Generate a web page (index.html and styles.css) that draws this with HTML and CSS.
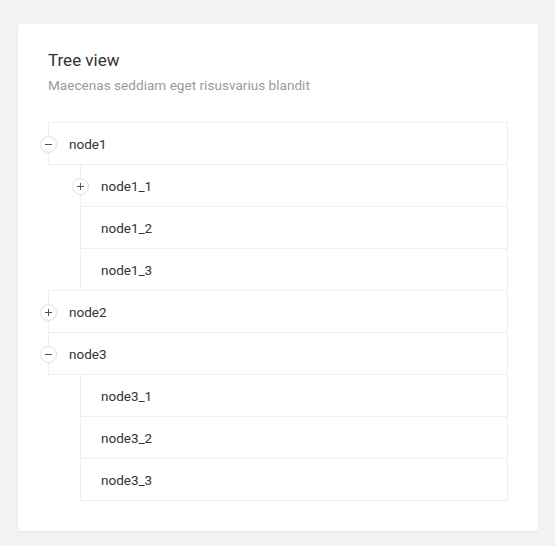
FILE: index.html
```html
<!DOCTYPE html>
<html>
<head>
<meta charset="utf-8">
<link rel="stylesheet" href="styles.css">
</head>
<body>
<div class="card">
  <h1 class="title">Tree view</h1>
  <p class="subtitle">Maecenas seddiam eget risusvarius blandit</p>
  <div class="tree">
    <div class="node">
      <div class="row"><span class="toggle minus"></span>node1</div>
      <div class="children">
        <div class="node"><div class="row"><span class="toggle plus"></span>node1_1</div></div>
        <div class="node"><div class="row">node1_2</div></div>
        <div class="node"><div class="row">node1_3</div></div>
      </div>
    </div>
    <div class="node">
      <div class="row"><span class="toggle plus"></span>node2</div>
    </div>
    <div class="node">
      <div class="row"><span class="toggle minus"></span>node3</div>
      <div class="children">
        <div class="node"><div class="row">node3_1</div></div>
        <div class="node"><div class="row">node3_2</div></div>
        <div class="node"><div class="row">node3_3</div></div>
      </div>
    </div>
  </div>
</div>
</body>
</html>
```
FILE: styles.css
```css
html, body {
  margin: 0;
  padding: 0;
  background: #f2f2f2;
}
body {
  padding: 24px 17px 16px 18px;
  font-family: Roboto, "Liberation Sans", sans-serif;
}
.card {
  background: #fff;
  border-radius: 3px;
  box-shadow: 0 1px 2px rgba(0,0,0,0.06);
  padding: 26px 30px 31px 30px;
}
.title {
  margin: 0;
  font-size: 17px;
  line-height: 20px;
  font-weight: 400;
  color: #333;
}
.subtitle {
  margin: 6px 0 28px 0;
  font-size: 13.6px;
  line-height: 18px;
  color: #9a9a9a;
}
.children {
  padding-left: 32px;
}
.row {
  position: relative;
  box-sizing: border-box;
  height: 43px;
  margin-bottom: -1px;
  border: 1px solid #edf0f3;
  padding: 1px 0 0 20px;
  display: flex;
  align-items: center;
  font-size: 13.5px;
  color: #333;
}
.toggle {
  position: absolute;
  left: -9px;
  top: 13px;
  box-sizing: border-box;
  width: 17px;
  height: 17px;
  border: 1px solid #dde2e8;
  border-radius: 50%;
  background: #fff;
}
.toggle::before,
.toggle::after {
  content: "";
  position: absolute;
  background: #555;
}
.toggle::before {
  left: 4px;
  top: 7px;
  width: 7px;
  height: 1px;
}
.plus::after {
  left: 7px;
  top: 4px;
  width: 1px;
  height: 7px;
}
.minus::after {
  display: none;
}
```
